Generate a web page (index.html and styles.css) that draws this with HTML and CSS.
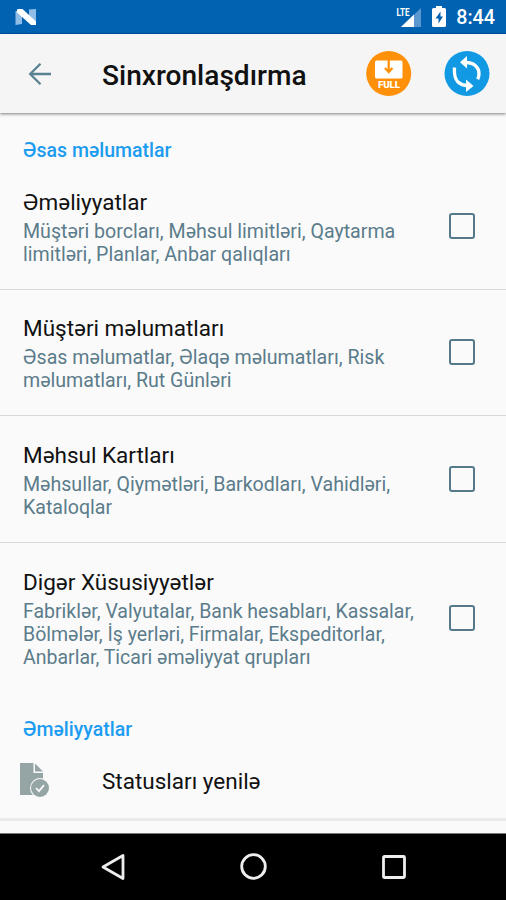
FILE: index.html
```html
<!DOCTYPE html>
<html lang="az">
<head>
  <meta charset="utf-8">
  <title>Sinxronlaşdırma</title>
  <link rel="stylesheet" href="styles.css">
</head>
<body>
  <div class="statusbar">
    <svg class="logo" width="22" height="18" viewBox="0 0 22 18">
      <path d="M0.500 3L7 5v11L0.500 17zM14 1.500l7-.5v15l-7-3z" fill="#8fbde8"/>
      <path d="M2.500 1h5L21 13.500V17h-5L1.500 4z" fill="#fff"/>
    </svg>
    <div class="status-icons">
      <svg class="signal" width="26" height="26" viewBox="0 -4 26 26">
        <path d="M25 0v19H5z" fill="#5c98d0"/>
        <path d="M18 6.500V19H5z" fill="#fff"/>
        <path d="M0-2h15v8l-3 3H0z" fill="#0062b1"/>
        <text x="0.500" y="8" class="lte" textLength="13" lengthAdjust="spacingAndGlyphs">LTE</text>
      </svg>
      <svg class="battery" width="14" height="21" viewBox="0 0 14 21">
        <path d="M4 0h6v2h2.500q1.500 0 1.500 1.500v16q0 1.500-1.500 1.500h-11Q0 21 0 19.500v-16Q0 2 1.500 2H4z" fill="#fff"/>
        <path d="M8.500 5.500L3.500 12.500h3V17.500l4.500-7H8.500z" fill="#0062b1"/>
      </svg>
      <span class="time">8:44</span>
    </div>
  </div>

  <div class="toolbar">
    <svg class="back" width="24" height="24" viewBox="0 0 24 24">
      <path d="M23 12H2M12.500 1.700L2.200 12l10.300 10.300" fill="none" stroke="#5a8293" stroke-width="2.300"/>
    </svg>
    <h1>Sinxronlaşdırma</h1>
    <svg class="full" width="46" height="46" viewBox="0 0 46 46">
      <circle cx="22.700" cy="22.500" r="22.500" fill="#ff9009"/>
      <rect x="9" y="9.500" width="27.500" height="18" rx="1.500" fill="#fff"/>
      <path d="M22.700 9v11.500M19 17l3.700 4 3.700-4" fill="none" stroke="#ff9009" stroke-width="2.300"/>
      <text x="12" y="37" class="full-text" textLength="22">FULL</text>
    </svg>
    <svg class="sync" width="46" height="46" viewBox="0 0 46 46">
      <circle cx="23" cy="22.500" r="22.500" fill="#1199e3"/>
      <g fill="none" stroke="#fff" stroke-width="3.300">
        <path d="M22 11.500c8 0 13 5 13 11q0 3.500-1.300 5.800"/>
        <path d="M10.500 16.500q-.8 10 3.500 14.500 4 3.500 9 3.500"/>
      </g>
      <path d="M23 5v12.500L16 11.300zM22 28.500v12.500L29.500 35z" fill="#fff"/>
    </svg>
  </div>

  <div class="content">
    <h2>Əsas məlumatlar</h2>
    <label class="row">
      <span class="text">
        <span class="title">Əməliyyatlar</span>
        <span class="summary">Müştəri borcları, Məhsul limitləri, Qaytarma<br>limitləri, Planlar, Anbar qalıqları</span>
      </span>
      <input type="checkbox">
    </label>
    <label class="row">
      <span class="text">
        <span class="title">Müştəri məlumatları</span>
        <span class="summary">Əsas məlumatlar, Əlaqə məlumatları, Risk<br>məlumatları, Rut Günləri</span>
      </span>
      <input type="checkbox">
    </label>
    <label class="row">
      <span class="text">
        <span class="title">Məhsul Kartları</span>
        <span class="summary">Məhsullar, Qiymətləri, Barkodları, Vahidləri,<br>Kataloqlar</span>
      </span>
      <input type="checkbox">
    </label>
    <label class="row last">
      <span class="text">
        <span class="title">Digər Xüsusiyyətlər</span>
        <span class="summary">Fabriklər, Valyutalar, Bank hesabları, Kassalar,<br>Bölmələr, İş yerləri, Firmalar, Ekspeditorlar,<br>Anbarlar, Ticari əməliyyat qrupları</span>
      </span>
      <input type="checkbox">
    </label>

    <h2>Əməliyyatlar</h2>
    <div class="action">
      <svg class="doc" width="32" height="36" viewBox="0 0 32 36">
        <path d="M1 1h13.500v10H24v22H1z" fill="#95a5a6"/>
        <path d="M16 1.500L24 9.500h-8z" fill="#95a5a6"/>
        <circle cx="21" cy="26" r="10" fill="#fafafa"/>
        <circle cx="21" cy="26" r="9" fill="#95a5a6"/>
        <path d="M17 26l3 3.200 5-6" fill="none" stroke="#fafafa" stroke-width="1.800"/>
      </svg>
      <span class="title">Statusları yenilə</span>
    </div>
  </div>

  <div class="navbar">
    <svg width="26" height="28" viewBox="0 0 26 28">
      <path d="M24 2.500v23L4 14z" fill="none" stroke="#eee" stroke-width="2.800" stroke-linejoin="round"/>
    </svg>
    <svg width="28" height="28" viewBox="0 0 28 28">
      <circle cx="14.500" cy="13.500" r="11.800" fill="none" stroke="#eee" stroke-width="2.800"/>
    </svg>
    <svg width="26" height="26" viewBox="0 0 26 26">
      <rect x="2.500" y="2.500" width="21" height="21" rx="1" fill="none" stroke="#eee" stroke-width="2.800"/>
    </svg>
  </div>
</body>
</html>
```
FILE: styles.css
```css
* {
  box-sizing: border-box;
}

body {
  margin: 0;
  height: 900px;
  display: flex;
  flex-direction: column;
  overflow: hidden;
  font-family: Roboto, "Noto Sans", sans-serif;
  background: #fafafa;
  color: #111;
}

.statusbar {
  height: 34px;
  background: #0062b1;
  border-bottom: 1px solid #0050a8;
  display: flex;
  align-items: center;
  justify-content: space-between;
  padding: 0 11px 0 15px;
}

.status-icons {
  display: flex;
  align-items: center;
}

.signal {
  margin-right: 10px;
  overflow: visible;
}

.battery {
  margin-right: 10px;
}

.lte {
  font-size: 11.5px;
  font-weight: 700;
  fill: #fff;
}

.time {
  color: #fff;
  font-size: 19.7px;
  font-weight: 500;
  line-height: 34px;
  padding-top: 3px;
}

.toolbar {
  height: 79px;
  background: #f5f5f5;
  box-shadow: 0 1px 3px rgba(0, 0, 0, 0.5);
  display: flex;
  align-items: center;
  padding: 0 16px 0 28px;
}

.toolbar h1 {
  flex: 1;
  margin: 0 0 0 50px;
  padding-top: 4px;
  font-size: 28.1px;
  font-weight: 500;
  line-height: 33px;
}

.full {
  margin-right: 32px;
}

.full-text {
  font-size: 9.8px;
  font-weight: 900;
  fill: #fff;
}

.content {
  flex: 1;
}

h2 {
  margin: 0;
  padding: 25px 23px 0;
  height: 50px;
  font-size: 19.5px;
  font-weight: 500;
  line-height: 26px;
  color: #1c9cf0;
}

.row {
  display: flex;
  align-items: center;
  height: 126.67px;
  padding: 0 31px 0 23px;
  border-bottom: 1px solid #d9d9d9;
}

.row.last {
  height: 149.5px;
  border-bottom: none;
}

.text {
  flex: 1;
  padding-top: 1px;
}

.title {
  display: block;
  font-size: 22.5px;
  line-height: 30px;
}

.summary {
  display: block;
  margin-top: 3px;
  font-size: 19.6px;
  line-height: 23.2px;
  color: #5b7c8b;
  white-space: nowrap;
}

.row.last .summary {
  font-size: 19.5px;
}

input[type="checkbox"] {
  appearance: none;
  width: 26px;
  height: 26px;
  margin: 0;
  border: 2px solid #54798a;
  border-radius: 3px;
}

.action {
  display: flex;
  align-items: center;
  height: 79px;
  padding-left: 19px;
  border-bottom: 3px solid #ebebeb;
}

.action .title {
  margin-left: 51px;
  padding-top: 2px;
}

.navbar {
  height: 67px;
  background: #000;
  border-top: 1px solid #777;
  display: flex;
  align-items: center;
  justify-content: center;
  gap: 114px;
}
```
